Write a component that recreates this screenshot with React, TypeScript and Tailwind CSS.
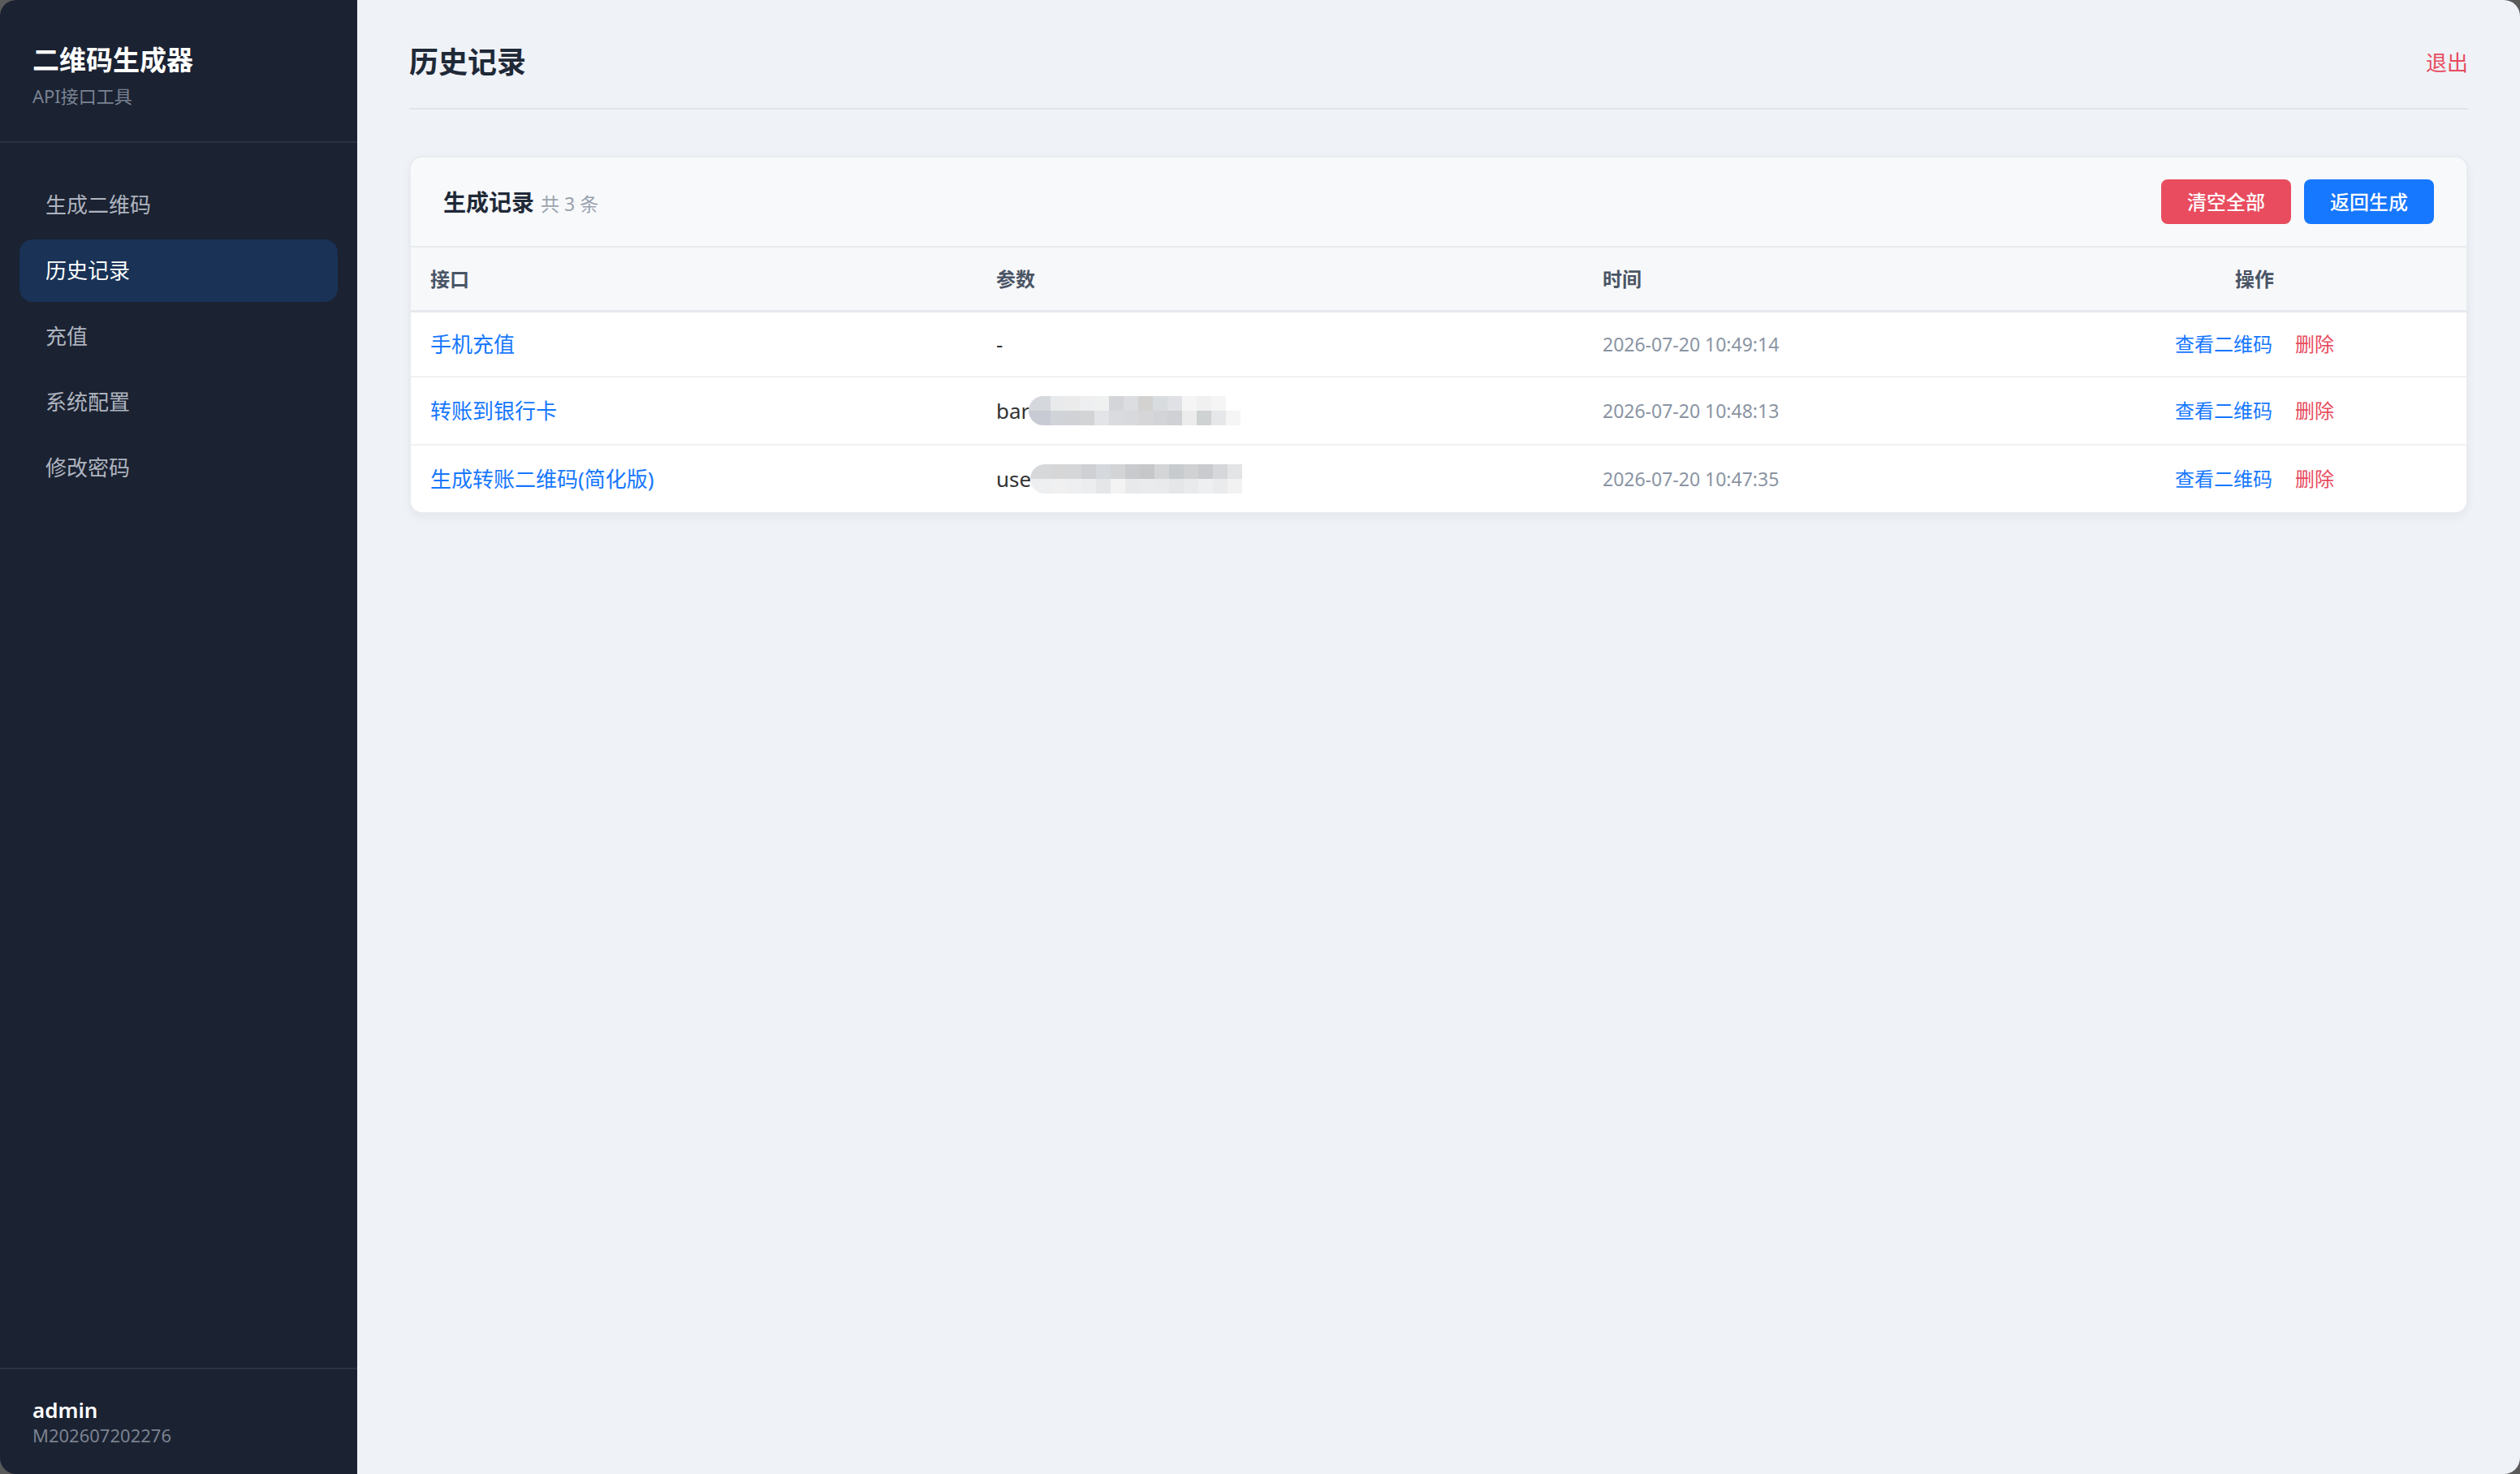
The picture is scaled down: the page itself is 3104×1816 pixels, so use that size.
const navItems = ['生成二维码', '历史记录', '充值', '系统配置', '修改密码'];

type Row = {
  api: string;
  prefix: string;
  mosaic?: { top: string[]; bottom: string[] };
  time: string;
};

const rows: Row[] = [
  { api: '手机充值', prefix: '-', time: '2026-07-20 10:49:14' },
  {
    api: '转账到银行卡',
    prefix: 'bar',
    time: '2026-07-20 10:48:13',
    mosaic: {
      top: ['#d5d8dd', '#e9eaec', '#ebebec', '#eeeff0', '#eff0f0', '#d3d5d9', '#dcdde0', '#d3d2d1', '#d8dcdf', '#dfe1e4', '#f5f5f6', '#f0f0f1', '#f5f5f5'],
      bottom: ['#c8cbd3', '#d0d3d8', '#d0d2d6', '#d3d4d6', '#e2e4e7', '#d9dbde', '#d7d9dc', '#d6d6d8', '#d2d4d7', '#d0d1d4', '#ececec', '#cfd2d3', '#e6e7e9', '#f5f5f6'],
    },
  },
  {
    api: '生成转账二维码(简化版)',
    prefix: 'use',
    time: '2026-07-20 10:47:35',
    mosaic: {
      top: ['#d6d8da', '#d6d6d6', '#d5d6d8', '#cfd0d4', '#d5d8dc', '#d2d4d6', '#c9cacd', '#c6c7c9', '#d3d5d7', '#c8cbce', '#d0d1d3', '#c9cbce', '#d5d7da', '#e3e4e6'],
      bottom: ['#eeeff0', '#f0f0f1', '#eeeff0', '#ecedee', '#e5e6e7', '#f3f3f4', '#e8e9ea', '#eaebec', '#e9eaeb', '#e5e6e8', '#e9eaeb', '#eeeff0', '#eaebec', '#f2f2f3'],
    },
  },
];

function Mosaic({ top, bottom }: { top: string[]; bottom: string[] }) {
  const renderRow = (cells: string[]) => (
    <div className="flex h-[18px]">
      {cells.map((c, i) => (
        <div key={i} className={i === 0 ? 'h-full w-[27px]' : 'h-full w-[18px]'} style={{ backgroundColor: c }} />
      ))}
    </div>
  );
  return (
    <div className="flex flex-col rounded-l-[18px] overflow-hidden">
      {renderRow(top)}
      {renderRow(bottom)}
    </div>
  );
}

export default function App() {
  return (
    <div className="w-[3104px] h-[1816px] bg-[#5a5a5a] font-['Noto_Sans','Noto_Sans_CJK_SC',sans-serif]">
      <div className="w-full h-full rounded-[20px] overflow-hidden flex">
        <aside className="w-[440px] shrink-0 bg-[#1b2232] flex flex-col">
          <div className="px-[40px] pt-[50px] pb-[40px] border-b-2 border-[#2a3243]">
            <div className="text-[33px] leading-[48px] font-bold text-white">二维码生成器</div>
            <div className="mt-[4px] text-[22px] leading-[32px] text-[#7a8291]">API接口工具</div>
          </div>
          <nav className="flex-1 px-[24px] pt-[38px] flex flex-col gap-[4px]">
            {navItems.map((item) => {
              const active = item === '历史记录';
              return (
                <div
                  key={item}
                  className={
                    active
                      ? 'h-[77px] px-[32px] flex items-center rounded-[16px] bg-[#193256] text-white text-[26px]'
                      : 'h-[77px] px-[32px] flex items-center rounded-[16px] text-[#aeb4bf] text-[26px]'
                  }
                >
                  {item}
                </div>
              );
            })}
          </nav>
          <div className="border-t-2 border-[#2a3243] px-[40px] pt-[34px] pb-[33px]">
            <div className="text-[26px] leading-[32px] font-semibold text-white">admin</div>
            <div className="text-[22px] leading-[30px] text-[#7a8291]">M202607202276</div>
          </div>
        </aside>

        <main className="flex-1 bg-[#eff2f7] px-[64px] pt-[53px]">
          <div className="flex items-center justify-between pb-[32px] border-b-2 border-[#e2e6ec]">
            <h1 className="text-[36px] leading-[48px] font-bold text-[#1f2937]">历史记录</h1>
            <span className="text-[26px] leading-[36px] text-[#e84c5e]">退出</span>
          </div>

          <div className="mt-[57px] bg-white rounded-[16px] border-2 border-[#e8ebf0] shadow-[0_4px_12px_rgba(15,23,42,0.05)] overflow-hidden">
            <div className="h-[111px] px-[40px] flex items-center justify-between bg-[#f8f9fb] border-b-2 border-[#e8ebf0]">
              <div className="flex items-baseline">
                <span className="text-[28px] font-bold text-[#1f2937]">生成记录</span>
                <span className="ml-[8px] text-[23px] text-[#9aa2ae]">共 3 条</span>
              </div>
              <div className="flex gap-[16px]">
                <button className="h-[55px] w-[160px] rounded-[8px] bg-[#e84c5e] text-white text-[24px] font-medium">清空全部</button>
                <button className="h-[55px] w-[160px] rounded-[8px] bg-[#1677ff] text-white text-[24px] font-medium">返回生成</button>
              </div>
            </div>

            <div className="grid grid-cols-[697px_747px_566px_522px] h-[80px] items-center bg-[#f7f8fa] border-b-[3px] border-[#e6e9ee] text-[24px] font-bold text-[#4a5565]">
              <div className="px-[24px]">接口</div>
              <div className="px-[24px]">参数</div>
              <div className="px-[24px]">时间</div>
              <div className="px-[24px] text-center">操作</div>
            </div>

            {rows.map((r, idx) => (
              <div
                key={r.api}
                className={
                  idx < rows.length - 1
                    ? 'grid grid-cols-[697px_747px_566px_522px] items-center py-[23px] min-h-[80px] border-b-2 border-[#f0f1f5]'
                    : 'grid grid-cols-[697px_747px_566px_522px] items-center py-[23px] min-h-[80px]'
                }
              >
                <div className="px-[24px] text-[26px] leading-[32px] text-[#1677ff]">{r.api}</div>
                <div className="px-[24px] flex items-center text-[26px] leading-[32px] text-[#333333]">
                  <span>{r.prefix}</span>
                  {r.mosaic && (
                    <div className="ml-[-1px]">
                      <Mosaic top={r.mosaic.top} bottom={r.mosaic.bottom} />
                    </div>
                  )}
                </div>
                <div className="px-[24px] text-[23px] leading-[32px] text-[#8a94a3]">{r.time}</div>
                <div className="px-[24px] flex justify-center gap-[28px] text-[24px] leading-[32px]">
                  <span className="text-[#1677ff]">查看二维码</span>
                  <span className="text-[#e84c5e]">删除</span>
                </div>
              </div>
            ))}
          </div>
        </main>
      </div>
    </div>
  );
}
